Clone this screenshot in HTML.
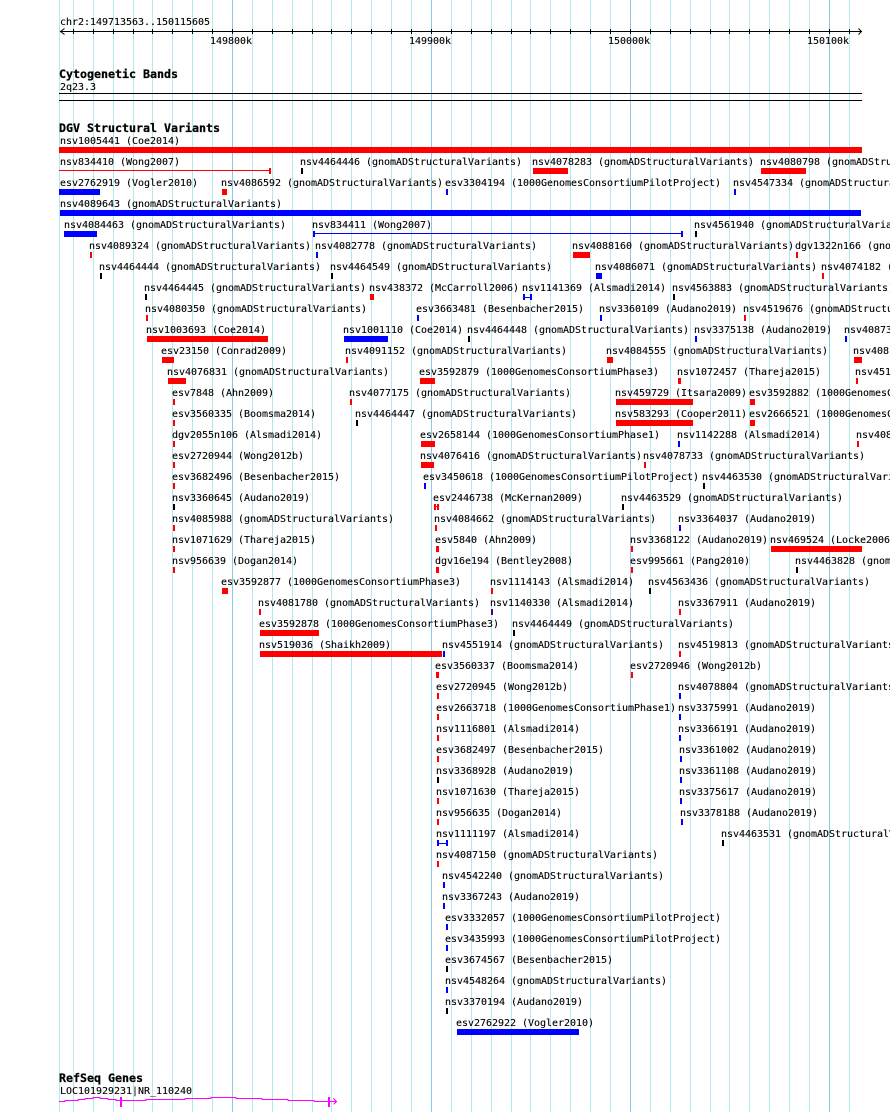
<!DOCTYPE html>
<html><head><meta charset="utf-8"><title>DGV tracks</title>
<style>
html,body{margin:0;padding:0;background:#fff;width:890px;height:1112px;overflow:hidden}
svg{display:block;position:absolute;left:0;top:0}
text{font-family:"DejaVu Sans Mono","Liberation Mono",monospace;font-size:10px;letter-spacing:-.02px;fill:#000;stroke:#000;stroke-width:.12px;white-space:pre}
.h{font-weight:bold;font-size:11.66px;stroke-width:.25px}
rect{shape-rendering:crispEdges;height:6px}
.r{fill:#f00}.b{fill:#00f}.k{fill:#000}.p{fill:#400090}
.g rect{height:1112px;width:1px;fill:#b0eaf0}
.g .m{fill:#88c8e8}
.t rect{height:5px;width:1px;fill:#000}
.l{height:1px!important}
</style></head><body>
<svg width="890" height="1112" viewBox="0 0 890 1112">
<g class="g"><rect x="59" y="0"/><rect x="73" y="0"/><rect x="93" y="0"/><rect x="113" y="0"/><rect x="133" y="0"/><rect x="152" y="0"/><rect x="172" y="0"/><rect x="192" y="0"/><rect x="212" y="0"/><rect class="m" x="232" y="0"/><rect x="252" y="0"/><rect x="272" y="0"/><rect x="292" y="0"/><rect x="312" y="0"/><rect x="331" y="0"/><rect x="351" y="0"/><rect x="371" y="0"/><rect x="391" y="0"/><rect x="411" y="0"/><rect class="m" x="431" y="0"/><rect x="451" y="0"/><rect x="471" y="0"/><rect x="491" y="0"/><rect x="511" y="0"/><rect x="530" y="0"/><rect x="550" y="0"/><rect x="570" y="0"/><rect x="590" y="0"/><rect x="610" y="0"/><rect class="m" x="630" y="0"/><rect x="650" y="0"/><rect x="670" y="0"/><rect x="690" y="0"/><rect x="710" y="0"/><rect x="729" y="0"/><rect x="749" y="0"/><rect x="769" y="0"/><rect x="789" y="0"/><rect x="809" y="0"/><rect class="m" x="829" y="0"/><rect x="849" y="0"/></g>

<!-- axis -->
<text x="60" y="25">chr2:149713563..150115605</text>
<rect class="k l" x="60" y="31" width="802"/>
<g class="t" transform="translate(0,29)"><rect x="73"/><rect x="93"/><rect x="113"/><rect x="133"/><rect x="152"/><rect x="172"/><rect x="192"/><rect x="212"/><rect x="232"/><rect x="252"/><rect x="272"/><rect x="292"/><rect x="312"/><rect x="331"/><rect x="351"/><rect x="371"/><rect x="391"/><rect x="411"/><rect x="431"/><rect x="451"/><rect x="471"/><rect x="491"/><rect x="511"/><rect x="530"/><rect x="550"/><rect x="570"/><rect x="590"/><rect x="610"/><rect x="630"/><rect x="650"/><rect x="670"/><rect x="690"/><rect x="710"/><rect x="729"/><rect x="749"/><rect x="769"/><rect x="789"/><rect x="809"/><rect x="829"/><rect x="849"/></g>
<path d="M64.5 28.5L60.5 31.5L64.5 34.5M858.5 28.5L861.5 31.5L858.5 34.5" fill="none" stroke="#000" stroke-width="1"/>
<text x="210" y="44">149800k</text><text x="409" y="44">149900k</text><text x="608" y="44">150000k</text><text x="807" y="44">150100k</text>

<text class="h" x="59" y="78">Cytogenetic Bands</text>
<text x="60" y="90">2q23.3</text>
<rect class="k l" x="59" y="93" width="803"/>
<rect class="k l" x="59" y="100" width="803"/>
<text class="h" x="59" y="132">DGV Structural Variants</text>

<!-- r1 -->
<rect class="r" x="59" y="147" width="803"/>
<text x="60" y="144">nsv1005441 (Coe2014)</text>
<!-- r2 -->
<rect class="r l" x="59" y="170" width="211"/><rect class="r" x="269" y="168" width="2"/>
<rect class="k" x="301" y="168" width="2"/><rect class="r" x="533" y="168" width="35"/><rect class="r" x="761" y="168" width="45"/>
<text x="60" y="165">nsv834410 (Wong2007)</text><text x="300" y="165">nsv4464446 (gnomADStructuralVariants)</text><text x="532" y="165">nsv4078283 (gnomADStructuralVariants)</text><text x="760" y="165">nsv4080798 (gnomADStructuralVariants)</text>
<!-- r3 -->
<rect class="b" x="59" y="189" width="41"/><rect class="r" x="222" y="189" width="5"/><rect class="b" x="446" y="189" width="2"/><rect class="b" x="734" y="189" width="2"/>
<text x="60" y="186">esv2762919 (Vogler2010)</text><text x="221" y="186">nsv4086592 (gnomADStructuralVariants)</text><text x="445" y="186">esv3304194 (1000GenomesConsortiumPilotProject)</text><text x="733" y="186">nsv4547334 (gnomADStructuralVariants)</text>
<!-- r4 -->
<rect class="b" x="60" y="210" width="801"/>
<text x="60" y="207">nsv4089643 (gnomADStructuralVariants)</text>
<!-- r5 -->
<rect class="b" x="64" y="231" width="33"/><rect class="b l" x="313" y="233" width="370"/><rect class="b" x="313" y="231" width="2"/><rect class="b" x="681" y="231" width="2"/><rect class="k" x="695" y="231" width="2"/>
<text x="64" y="228">nsv4084463 (gnomADStructuralVariants)</text><text x="312" y="228">nsv834411 (Wong2007)</text><text x="694" y="228">nsv4561940 (gnomADStructuralVariants)</text>
<!-- r6 -->
<rect class="r" x="90" y="252" width="2"/><rect class="b" x="316" y="252" width="2"/><rect class="r" x="573" y="252" width="17"/><rect class="r" x="796" y="252" width="2"/>
<text x="89" y="249">nsv4089324 (gnomADStructuralVariants)</text><text x="315" y="249">nsv4082778 (gnomADStructuralVariants)</text><text x="572" y="249">nsv4088160 (gnomADStructuralVariants)</text><text x="795" y="249">dgv1322n166 (gnomADStructuralVariants)</text>
<!-- r7 -->
<rect class="k" x="100" y="273" width="2"/><rect class="k" x="331" y="273" width="2"/><rect class="b" x="596" y="273" width="6"/><rect class="r" x="822" y="273" width="2"/>
<text x="99" y="270">nsv4464444 (gnomADStructuralVariants)</text><text x="330" y="270">nsv4464549 (gnomADStructuralVariants)</text><text x="595" y="270">nsv4086071 (gnomADStructuralVariants)</text><text x="821" y="270">nsv4074182 (gnomADStructuralVariants)</text>
<!-- r8 -->
<rect class="k" x="145" y="294" width="2"/><rect class="r" x="370" y="294" width="4"/><rect class="b" x="523" y="294" width="2"/><rect class="b" x="530" y="294" width="2"/><rect class="b l" x="523" y="297" width="9"/><rect class="k" x="673" y="294" width="2"/>
<text x="144" y="291">nsv4464445 (gnomADStructuralVariants)</text><text x="369" y="291">nsv438372 (McCarroll2006)</text><text x="522" y="291">nsv1141369 (Alsmadi2014)</text><text x="672" y="291">nsv4563883 (gnomADStructuralVariants)</text>
<!-- r9 -->
<rect class="r" x="146" y="315" width="2"/><rect class="b" x="417" y="315" width="2"/><rect class="b" x="600" y="315" width="2"/><rect class="r" x="744" y="315" width="2"/>
<text x="145" y="312">nsv4080350 (gnomADStructuralVariants)</text><text x="416" y="312">esv3663481 (Besenbacher2015)</text><text x="599" y="312">nsv3360109 (Audano2019)</text><text x="743" y="312">nsv4519676 (gnomADStructuralVariants)</text>
<!-- r10 -->
<rect class="r" x="147" y="336" width="121"/><rect class="b" x="344" y="336" width="44"/><rect class="k" x="468" y="336" width="2"/><rect class="b" x="695" y="336" width="2"/><rect class="b" x="845" y="336" width="2"/>
<text x="146" y="333">nsv1003693 (Coe2014)</text><text x="343" y="333">nsv1001110 (Coe2014)</text><text x="467" y="333">nsv4464448 (gnomADStructuralVariants)</text><text x="694" y="333">nsv3375138 (Audano2019)</text><text x="844" y="333">nsv4087375 (gnomADStructuralVariants)</text>
<!-- r11 -->
<rect class="r" x="162" y="357" width="12"/><rect class="r" x="346" y="357" width="2"/><rect class="r" x="607" y="357" width="6"/><rect class="r" x="854" y="357" width="8"/>
<text x="161" y="354">esv23150 (Conrad2009)</text><text x="345" y="354">nsv4091152 (gnomADStructuralVariants)</text><text x="606" y="354">nsv4084555 (gnomADStructuralVariants)</text><text x="853" y="354">nsv4081234 (gnomADStructuralVariants)</text>
<!-- r12 -->
<rect class="r" x="168" y="378" width="18"/><rect class="r" x="420" y="378" width="15"/><rect class="r" x="678" y="378" width="3"/><rect class="r" x="856" y="378" width="2"/>
<text x="167" y="375">nsv4076831 (gnomADStructuralVariants)</text><text x="419" y="375">esv3592879 (1000GenomesConsortiumPhase3)</text><text x="677" y="375">nsv1072457 (Thareja2015)</text><text x="855" y="375">nsv4519000 (gnomADStructuralVariants)</text>
<!-- r13 -->
<rect class="r" x="173" y="399" width="2"/><rect class="r" x="350" y="399" width="2"/><rect class="r" x="616" y="399" width="77"/><rect class="r" x="750" y="399" width="5"/>
<text x="172" y="396">esv7848 (Ahn2009)</text><text x="349" y="396">nsv4077175 (gnomADStructuralVariants)</text><text x="615" y="396">nsv459729 (Itsara2009)</text><text x="749" y="396">esv3592882 (1000GenomesConsortiumPhase3)</text>
<!-- r14 -->
<rect class="r" x="173" y="420" width="2"/><rect class="k" x="356" y="420" width="2"/><rect class="r" x="616" y="420" width="77"/><rect class="r" x="750" y="420" width="5"/>
<text x="172" y="417">esv3560335 (Boomsma2014)</text><text x="355" y="417">nsv4464447 (gnomADStructuralVariants)</text><text x="615" y="417">nsv583293 (Cooper2011)</text><text x="749" y="417">esv2666521 (1000GenomesConsortiumPhase1)</text>
<!-- r15 -->
<rect class="r" x="173" y="441" width="2"/><rect class="r" x="421" y="441" width="14"/><rect class="b" x="678" y="441" width="2"/><rect class="r" x="857" y="441" width="2"/>
<text x="172" y="438">dgv2055n106 (Alsmadi2014)</text><text x="420" y="438">esv2658144 (1000GenomesConsortiumPhase1)</text><text x="677" y="438">nsv1142288 (Alsmadi2014)</text><text x="856" y="438">nsv4081111 (gnomADStructuralVariants)</text>
<!-- r16 -->
<rect class="r" x="173" y="462" width="2"/><rect class="r" x="421" y="462" width="13"/><rect class="r" x="644" y="462" width="2"/>
<text x="172" y="459">esv2720944 (Wong2012b)</text><text x="420" y="459">nsv4076416 (gnomADStructuralVariants)</text><text x="643" y="459">nsv4078733 (gnomADStructuralVariants)</text>
<!-- r17 -->
<rect class="r" x="173" y="483" width="2"/><rect class="b" x="424" y="483" width="2"/><rect class="k" x="703" y="483" width="2"/>
<text x="172" y="480">esv3682496 (Besenbacher2015)</text><text x="423" y="480">esv3450618 (1000GenomesConsortiumPilotProject)</text><text x="702" y="480">nsv4463530 (gnomADStructuralVariants)</text>
<!-- r18 -->
<rect class="k" x="173" y="504" width="2"/><rect class="r" x="434" y="504" width="2"/><rect class="r" x="437" y="504" width="2"/><rect class="r l" x="434" y="506" width="5"/><rect class="k" x="622" y="504" width="2"/>
<text x="172" y="501">nsv3360645 (Audano2019)</text><text x="433" y="501">esv2446738 (McKernan2009)</text><text x="621" y="501">nsv4463529 (gnomADStructuralVariants)</text>
<!-- r19 -->
<rect class="r" x="173" y="525" width="2"/><rect class="r" x="435" y="525" width="2"/><rect class="b" x="679" y="525" width="2"/>
<text x="172" y="522">nsv4085988 (gnomADStructuralVariants)</text><text x="434" y="522">nsv4084662 (gnomADStructuralVariants)</text><text x="678" y="522">nsv3364037 (Audano2019)</text>
<!-- r20 -->
<rect class="r" x="173" y="546" width="2"/><rect class="r" x="436" y="546" width="3"/><rect class="r" x="631" y="546" width="2"/><rect class="r" x="771" y="546" width="91"/>
<text x="172" y="543">nsv1071629 (Thareja2015)</text><text x="435" y="543">esv5840 (Ahn2009)</text><text x="630" y="543">nsv3368122 (Audano2019)</text><text x="770" y="543">nsv469524 (Locke2006)</text>
<!-- r21 -->
<rect class="r" x="173" y="567" width="2"/><rect class="r" x="436" y="567" width="3"/><rect class="r" x="631" y="567" width="2"/><rect class="k" x="796" y="567" width="2"/>
<text x="172" y="564">nsv956639 (Dogan2014)</text><text x="435" y="564">dgv16e194 (Bentley2008)</text><text x="630" y="564">esv995661 (Pang2010)</text><text x="795" y="564">nsv4463828 (gnomADStructuralVariants)</text>
<!-- r22 -->
<rect class="r" x="222" y="588" width="6"/><rect class="r" x="491" y="588" width="2"/><rect class="k" x="649" y="588" width="2"/>
<text x="221" y="585">esv3592877 (1000GenomesConsortiumPhase3)</text><text x="490" y="585">nsv1114143 (Alsmadi2014)</text><text x="648" y="585">nsv4563436 (gnomADStructuralVariants)</text>
<!-- r23 -->
<rect class="r" x="259" y="609" width="2"/><rect class="p" x="491" y="609" width="2"/><rect class="r" x="679" y="609" width="2"/>
<text x="258" y="606">nsv4081780 (gnomADStructuralVariants)</text><text x="490" y="606">nsv1140330 (Alsmadi2014)</text><text x="678" y="606">nsv3367911 (Audano2019)</text>
<!-- r24 -->
<rect class="r" x="260" y="630" width="59"/><rect class="k" x="513" y="630" width="2"/>
<text x="259" y="627">esv3592878 (1000GenomesConsortiumPhase3)</text><text x="512" y="627">nsv4464449 (gnomADStructuralVariants)</text>
<!-- r25 -->
<rect class="r" x="260" y="651" width="182"/><rect class="b" x="443" y="651" width="2"/><rect class="r" x="679" y="651" width="2"/>
<text x="259" y="648">nsv519036 (Shaikh2009)</text><text x="442" y="648">nsv4551914 (gnomADStructuralVariants)</text><text x="678" y="648">nsv4519813 (gnomADStructuralVariants)</text>
<!-- r26 -->
<rect class="r" x="436" y="672" width="3"/><rect class="r" x="631" y="672" width="2"/>
<text x="435" y="669">esv3560337 (Boomsma2014)</text><text x="630" y="669">esv2720946 (Wong2012b)</text>
<!-- r27 -->
<rect class="r" x="437" y="693" width="2"/><rect class="b" x="679" y="693" width="2"/>
<text x="436" y="690">esv2720945 (Wong2012b)</text><text x="678" y="690">nsv4078804 (gnomADStructuralVariants)</text>
<!-- r28 -->
<rect class="r" x="437" y="714" width="2"/><rect class="b" x="679" y="714" width="2"/>
<text x="436" y="711">esv2663718 (1000GenomesConsortiumPhase1)</text><text x="678" y="711">nsv3375991 (Audano2019)</text>
<!-- r29 -->
<rect class="r" x="437" y="735" width="2"/><rect class="b" x="679" y="735" width="2"/>
<text x="436" y="732">nsv1116801 (Alsmadi2014)</text><text x="678" y="732">nsv3366191 (Audano2019)</text>
<!-- r30 -->
<rect class="r" x="437" y="756" width="2"/><rect class="b" x="680" y="756" width="2"/>
<text x="436" y="753">esv3682497 (Besenbacher2015)</text><text x="679" y="753">nsv3361002 (Audano2019)</text>
<!-- r31 -->
<rect class="k" x="437" y="777" width="2"/><rect class="b" x="680" y="777" width="2"/>
<text x="436" y="774">nsv3368928 (Audano2019)</text><text x="679" y="774">nsv3361108 (Audano2019)</text>
<!-- r32 -->
<rect class="r" x="437" y="798" width="2"/><rect class="b" x="680" y="798" width="2"/>
<text x="436" y="795">nsv1071630 (Thareja2015)</text><text x="679" y="795">nsv3375617 (Audano2019)</text>
<!-- r33 -->
<rect class="r" x="437" y="819" width="2"/><rect class="b" x="681" y="819" width="2"/>
<text x="436" y="816">nsv956635 (Dogan2014)</text><text x="680" y="816">nsv3378188 (Audano2019)</text>
<!-- r34 -->
<rect class="b" x="437" y="840" width="2"/><rect class="b" x="446" y="840" width="2"/><rect class="b l" x="437" y="843" width="11"/><rect class="k" x="722" y="840" width="2"/>
<text x="436" y="837">nsv1111197 (Alsmadi2014)</text><text x="721" y="837">nsv4463531 (gnomADStructuralVariants)</text>
<!-- r35 -->
<rect class="r" x="437" y="861" width="2"/>
<text x="436" y="858">nsv4087150 (gnomADStructuralVariants)</text>
<!-- r36 -->
<rect class="b" x="443" y="882" width="2"/>
<text x="442" y="879">nsv4542240 (gnomADStructuralVariants)</text>
<!-- r37 -->
<rect class="b" x="443" y="903" width="2"/>
<text x="442" y="900">nsv3367243 (Audano2019)</text>
<!-- r38 -->
<rect class="b" x="446" y="924" width="2"/>
<text x="445" y="921">esv3332057 (1000GenomesConsortiumPilotProject)</text>
<!-- r39 -->
<rect class="b" x="446" y="945" width="2"/>
<text x="445" y="942">esv3435993 (1000GenomesConsortiumPilotProject)</text>
<!-- r40 -->
<rect class="k" x="446" y="966" width="2"/>
<text x="445" y="963">esv3674567 (Besenbacher2015)</text>
<!-- r41 -->
<rect class="b" x="446" y="987" width="2"/>
<text x="445" y="984">nsv4548264 (gnomADStructuralVariants)</text>
<!-- r42 -->
<rect class="k" x="446" y="1008" width="2"/>
<text x="445" y="1005">nsv3370194 (Audano2019)</text>
<!-- r43 -->
<rect class="b" x="457" y="1029" width="122"/>
<text x="456" y="1026">esv2762922 (Vogler2010)</text>

<!-- refseq -->
<text class="h" x="59" y="1082">RefSeq Genes</text>
<text x="60" y="1094">LOC101929231|NR_110240</text>
<path d="M59 1101.5H65V1100.5H78V1099.5H85V1098.5H93V1097.5H100V1098.5H108V1099.5H116V1100.5H133V1100.5H146V1099.5H159V1099.5H185V1098.5H211V1097.5H236V1098.5H262V1099.5H288V1100.5H314V1101.5H336M333.5 1098.5L336.5 1101.5L333.5 1104.5" fill="none" stroke="#f0f" stroke-width="1" shape-rendering="crispEdges"/>
<rect x="120" y="1097" width="2" style="height:10px;fill:#f0f"/>
<rect x="328" y="1097" width="2" style="height:10px;fill:#f0f"/>
</svg>
</body></html>
